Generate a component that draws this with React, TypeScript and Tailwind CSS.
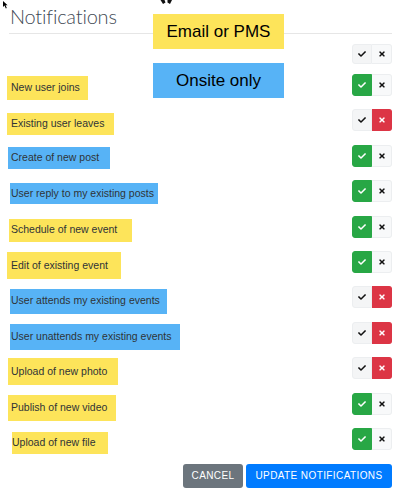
import React from "react";

type Row = { label: string; cls: string; on: boolean };

const Y = "bg-[#fde45a]";
const B = "bg-[#57b3f6]";

const rows: Row[] = [
  { label: "New user joins", cls: `ml-[7px] mt-[9px] w-[81px] h-[24px] pl-[4px] ${Y}`, on: true },
  { label: "Existing user leaves", cls: `ml-[7px] mt-[10px] w-[107px] h-[22px] pl-[4px] ${Y}`, on: false },
  { label: "Create of new post", cls: `ml-[8px] mt-[9px] w-[102px] h-[22px] pl-[3px] ${B}`, on: true },
  { label: "User reply to my existing posts", cls: `ml-[10px] mt-[10px] w-[148px] h-[21px] pl-[1px] ${B}`, on: true },
  { label: "Schedule of new event", cls: `ml-[9px] mt-[10px] w-[123px] h-[23px] pl-[2px] ${Y}`, on: true },
  { label: "Edit of existing event", cls: `ml-[7px] mt-[8px] w-[114px] h-[27px] pl-[4px] ${Y}`, on: true },
  { label: "User attends my existing events", cls: `ml-[10px] mt-[9px] w-[157px] h-[25px] pl-[1px] ${B}`, on: false },
  { label: "User unattends my existing events", cls: `ml-[10px] mt-[9px] w-[170px] h-[26px] pl-[1px] ${B}`, on: false },
  { label: "Upload of new photo", cls: `ml-[8px] mt-[8px] w-[110px] h-[27px] pl-[3px] ${Y}`, on: false },
  { label: "Publish of new video", cls: `ml-[8px] mt-[9px] w-[108px] h-[26px] pl-[3px] ${Y}`, on: true },
  { label: "Upload of new file", cls: `ml-[12px] mt-[11px] w-[96px] h-[22px] pl-[0px] ${Y}`, on: true },
];

function Check({ color }: { color: string }) {
  return (
    <svg viewBox="0 0 512 512" width="8" height="8" fill={color}>
      <path d="M173.898 439.404l-166.4-166.4c-9.997-9.997-9.997-26.206 0-36.204l36.203-36.204c9.997-9.998 26.207-9.998 36.204 0L192 312.69 432.095 72.596c9.997-9.997 26.207-9.997 36.204 0l36.203 36.204c9.997 9.997 9.997 26.206 0 36.204l-294.4 294.401c-9.998 9.997-26.207 9.997-36.204-.001z" />
    </svg>
  );
}

function Times({ color }: { color: string }) {
  return (
    <svg viewBox="0 0 352 512" width="6" height="8" fill={color}>
      <path d="M242.72 256l100.07-100.07c12.28-12.28 12.28-32.19 0-44.48l-22.24-22.24c-12.28-12.28-32.19-12.28-44.48 0L176 189.28 75.93 89.21c-12.28-12.28-32.19-12.280-44.48 0L9.21 111.45c-12.28 12.28-12.28 32.19 0 44.48L109.28 256 9.21 356.07c-12.28 12.28-12.28 32.19 0 44.48l22.24 22.24c12.28 12.28 32.2 12.28 44.48 0L176 322.72l100.07 100.07c12.28 12.28 32.2 12.28 44.48 0l22.24-22.24c12.28-12.28 12.28-32.19 0-44.48L242.72 256z" />
    </svg>
  );
}

function Toggle({ state, header }: { state: "on" | "off" | "none"; header?: boolean }) {
  const h = header ? "h-[20px]" : "h-[22px]";
  const left =
    state === "on"
      ? "bg-[#28a745] border-[#28a745]"
      : "bg-[#f4f5f6] border-[#eceef0]";
  const right =
    state === "off"
      ? "bg-[#dc3545] border-[#dc3545]"
      : "bg-[#f8f9fa] border-[#eceef0]";
  return (
    <div className={`flex ${h} self-center`}>
      <div className={`w-[20px] ${h} border rounded-l-[3px] flex items-center justify-center ${left}`}>
        <Check color={state === "on" ? "#ffffff" : "#111111"} />
      </div>
      <div className={`w-[20px] ${h} border border-l-0 rounded-r-[3px] flex items-center justify-center ${right}`}>
        <Times color={state === "off" ? "#ffffff" : "#111111"} />
      </div>
    </div>
  );
}

export default function App() {
  return (
    <div className="relative w-[400px] h-[489px] bg-white overflow-hidden font-['Liberation_Sans',Arial,sans-serif]">
      {/* cursor */}
      <svg className="absolute left-[3px] top-[1px]" width="6" height="8" viewBox="0 0 6 8">
        <path d="M0 0 L0 6 L1.5 4.6 L2.8 7.5 L3.8 7 L2.6 4.2 L4.6 4.2 Z" fill="#000" />
      </svg>
      <svg className="absolute left-[160px] top-0" width="13" height="5" viewBox="0 0 13 5">
        <path d="M0.5 0 L4.5 0 L5.5 2.5 L3 4 Z M7.5 0 L12 0 L10 4 L7.5 2.5 Z" fill="#111" />
      </svg>

      {/* Title */}
      <div className="mx-[9px] mr-[8px] h-[34px] border-b border-[#e6e6e6] pt-[4px]">
        <div className="pl-[1px] text-[20px] leading-[24px] font-light tracking-[-0.2px] text-[#3f4a55] font-['Lato','Open_Sans',sans-serif]">
          Notifications
        </div>
      </div>

      {/* header row */}
      <div className="h-[33.3px] flex justify-end items-start pr-[8px]">
        <div className="mt-[10px] flex">
          <Toggle state="none" header />
        </div>
      </div>

      {rows.map((r) => (
        <div key={r.label} className="h-[35.4px] flex justify-between items-start pr-[8px]">
          <div className={`flex items-center text-[10.5px] text-[#2f3337] whitespace-nowrap ${r.cls}`}>
            {r.label}
          </div>
          <Toggle state={r.on ? "on" : "off"} />
        </div>
      ))}

      {/* footer */}
      <div className="flex justify-end gap-[3px] pr-[8px] mt-[7px]">
        <button className="h-[24px] w-[60px] rounded-[3px] bg-[#6c757d] text-white text-[10px] tracking-[0.4px] uppercase">
          Cancel
        </button>
        <button className="h-[24px] w-[146px] rounded-[3px] bg-[#007bff] text-white text-[10px] tracking-[0.4px] uppercase">
          Update notifications
        </button>
      </div>

      {/* annotation boxes */}
      <div className="absolute left-[153px] top-[14px] w-[131px] h-[35px] bg-[#fde45a] flex items-center justify-center text-[17px] text-black">
        Email or PMS
      </div>
      <div className="absolute left-[153px] top-[63px] w-[131px] h-[35px] bg-[#57b3f6] flex items-center justify-center text-[17px] text-black">
        Onsite only
      </div>
    </div>
  );
}
